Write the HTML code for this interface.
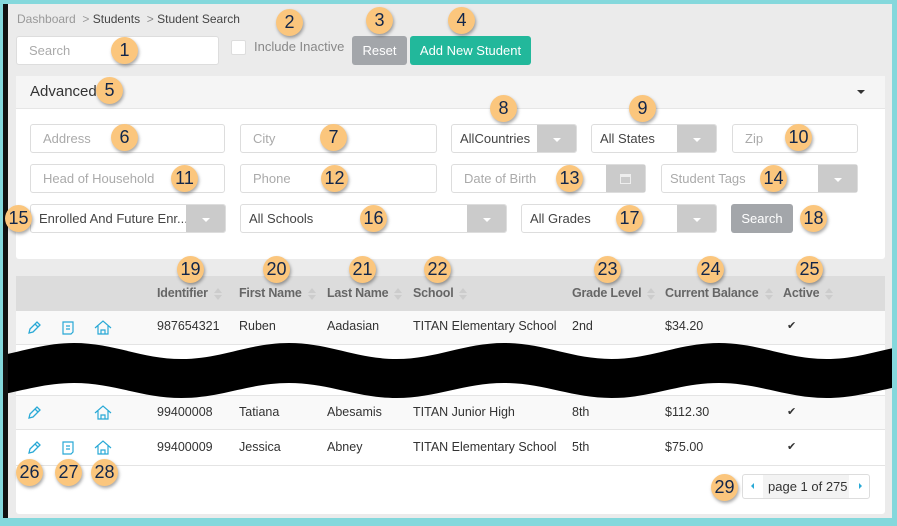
<!DOCTYPE html>
<html><head><meta charset="utf-8"><style>
*{box-sizing:border-box;margin:0;padding:0}
body{width:897px;height:526px;position:relative;overflow:hidden;background:#ebebeb;font-family:"Liberation Sans",sans-serif;font-size:13px;color:#333}
.a{position:absolute}
.inp{position:absolute;background:#fff;border:1px solid #ddd;border-radius:3px;color:#aaa;font-size:13px;padding-left:12px;display:flex;align-items:center}
.sel{position:absolute;background:#fff;border:1px solid #ddd;border-radius:3px;color:#444;font-size:13px;padding-left:8px;display:flex;align-items:center;overflow:hidden}
.sel .b{position:absolute;right:0;top:0;bottom:0;width:39px;background:#cbcbcb}
.sel .b:after{content:"";position:absolute;left:16px;top:13px;border-left:4px solid transparent;border-right:4px solid transparent;border-top:4px solid #fff}
.bd{position:absolute;width:27px;height:27px;border-radius:50%;background:#fbc67d;color:#12264a;font-size:18px;display:flex;align-items:center;justify-content:center;box-shadow:1px 2px 3px rgba(0,0,0,.35);z-index:5}
.h{position:absolute;top:286px;color:#666;font-weight:bold;font-size:12.5px;letter-spacing:-0.2px}
.c{position:absolute;font-size:12.5px;color:#333}
.srt{display:inline-block;width:8px;height:12px;position:relative;vertical-align:middle;margin-left:6px}
.srt:before{content:"";position:absolute;top:0;left:0;border-left:4px solid transparent;border-right:4px solid transparent;border-bottom:5px solid #ccc}
.srt:after{content:"";position:absolute;top:7px;left:0;border-left:4px solid transparent;border-right:4px solid transparent;border-top:5px solid #ccc}
</style></head><body>
<div class="a" style="left:17px;top:12px;font-size:12px;color:#999">Dashboard <span style="color:#999">&nbsp;&gt;&nbsp;</span><span style="color:#444">Students</span> <span style="color:#888">&nbsp;&gt;&nbsp;</span><span style="color:#444">Student Search</span></div>
<div class="inp" style="left:16px;top:36px;width:203px;height:29px">Search</div>
<div class="a" style="left:231px;top:40px;width:15px;height:15px;background:#fff;border:1px solid #ddd;border-radius:2px"></div>
<div class="a" style="left:254px;top:39px;color:#888;font-size:13px">Include Inactive</div>
<div class="a" style="left:352px;top:36px;width:55px;height:29px;background:#a3a6aa;border-radius:3px;color:#fff;display:flex;align-items:center;justify-content:center">Reset</div>
<div class="a" style="left:410px;top:36px;width:121px;height:29px;background:#22b89b;border-radius:3px;color:#fff;display:flex;align-items:center;justify-content:center">Add New Student</div>

<div class="a" style="left:16px;top:76px;width:869px;height:183px;background:#fff;border-radius:3px"></div>
<div class="a" style="left:16px;top:76px;width:869px;height:33px;background:#f5f5f5;border-bottom:1px solid #e6e6e6"></div>
<div class="a" style="left:30px;top:83px;font-size:15px;color:#333">Advanced</div>
<div class="a" style="left:857px;top:90px;border-left:4px solid transparent;border-right:4px solid transparent;border-top:4px solid #333"></div>

<div class="inp" style="left:30px;top:124px;width:195px;height:29px">Address</div>
<div class="inp" style="left:240px;top:124px;width:197px;height:29px">City</div>
<div class="sel" style="left:451px;top:124px;width:126px;height:29px">AllCountries<div class="b"></div></div>
<div class="sel" style="left:591px;top:124px;width:126px;height:29px">All States<div class="b"></div></div>
<div class="inp" style="left:732px;top:124px;width:126px;height:29px">Zip</div>

<div class="inp" style="left:30px;top:164px;width:195px;height:29px">Head of Household</div>
<div class="inp" style="left:240px;top:164px;width:197px;height:29px">Phone</div>
<div class="inp" style="left:451px;top:164px;width:195px;height:29px">Date of Birth<div class="a" style="right:0;top:0;bottom:0;width:39px;background:#cbcbcb"><div class="a" style="left:14px;top:9px;width:11px;height:10px;border:1px solid #eee;border-top:3px solid #eee"></div></div></div>
<div class="inp" style="left:661px;top:164px;width:197px;height:29px;padding-left:8px">Student Tags<div class="a" style="right:0;top:0;bottom:0;width:39px;background:#cbcbcb"></div><div class="a" style="right:15px;top:13px;border-left:4px solid transparent;border-right:4px solid transparent;border-top:4px solid #fff"></div></div>

<div class="sel" style="left:30px;top:204px;width:196px;height:29px;white-space:nowrap">Enrolled And Future Enr...<div class="b"></div></div>
<div class="sel" style="left:240px;top:204px;width:267px;height:29px">All Schools<div class="b"></div></div>
<div class="sel" style="left:521px;top:204px;width:196px;height:29px">All Grades<div class="b"></div></div>
<div class="a" style="left:731px;top:204px;width:62px;height:29px;background:#a3a6aa;border-radius:3px;color:#fff;display:flex;align-items:center;justify-content:center">Search</div>

<div class="a" style="left:16px;top:276px;width:869px;height:238px;background:#fff;border-radius:3px"></div>
<div class="a" style="left:16px;top:276px;width:869px;height:35px;background:#dcdcdc"></div>
<div class="h" style="left:157px">Identifier<span class="srt"></span></div>
<div class="h" style="left:239px">First Name<span class="srt"></span></div>
<div class="h" style="left:327px">Last Name<span class="srt"></span></div>
<div class="h" style="left:413px">School<span class="srt"></span></div>
<div class="h" style="left:572px">Grade Level<span class="srt"></span></div>
<div class="h" style="left:665px">Current Balance<span class="srt"></span></div>
<div class="h" style="left:783px">Active<span class="srt"></span></div>

<div class="a" style="left:16px;top:311px;width:869px;height:34px;background:#f9f9f9;border-bottom:1px solid #e4e4e4"></div>
<div class="a" style="left:16px;top:395px;width:869px;height:35px;background:#f9f9f9;border-top:1px solid #e4e4e4;border-bottom:1px solid #e4e4e4"></div>
<div class="a" style="left:16px;top:465px;width:869px;height:1px;background:#e4e4e4"></div>

<svg class="a" style="left:0;top:0" width="897" height="526">
<defs>
<g id="pen"><path d="M-5 5 L-4 1 L3 -6 L6 -3 L-1 4 Z M1 -4 L4 -1" fill="none" stroke="#29a9d6" stroke-width="1.3"/></g>
<g id="doc"><path d="M-5 -6 H5 V4 L3 6 H-5 Z M-2 -2 H2 M-2 1 H2" fill="none" stroke="#29a9d6" stroke-width="1.2"/></g>
<g id="hs"><path d="M-8 0 L0 -7 L8 0 M-5 -2 V6 H5 V-2 M-2 6 V2 H2 V6" fill="none" stroke="#29a9d6" stroke-width="1.2"/></g>
</defs>
<use href="#pen" x="34" y="328"/><use href="#doc" x="68" y="328"/><use href="#hs" x="103" y="328"/>
<use href="#pen" x="34" y="413"/><use href="#hs" x="103" y="413"/>
<use href="#pen" x="34" y="448"/><use href="#doc" x="68" y="448"/><use href="#hs" x="103" y="448"/>
</svg>

<div class="c" style="left:157px;top:319px">987654321</div><div class="c" style="left:239px;top:319px">Ruben</div><div class="c" style="left:327px;top:319px">Aadasian</div><div class="c" style="left:413px;top:319px">TITAN Elementary School</div><div class="c" style="left:572px;top:319px">2nd</div><div class="c" style="left:665px;top:319px">$34.20</div><div class="c" style="left:787px;top:319px;font-size:11px">✔</div>
<div class="c" style="left:157px;top:405px">99400008</div><div class="c" style="left:239px;top:405px">Tatiana</div><div class="c" style="left:327px;top:405px">Abesamis</div><div class="c" style="left:413px;top:405px">TITAN Junior High</div><div class="c" style="left:572px;top:405px">8th</div><div class="c" style="left:665px;top:405px">$112.30</div><div class="c" style="left:787px;top:405px;font-size:11px">✔</div>
<div class="c" style="left:157px;top:440px">99400009</div><div class="c" style="left:239px;top:440px">Jessica</div><div class="c" style="left:327px;top:440px">Abney</div><div class="c" style="left:413px;top:440px">TITAN Elementary School</div><div class="c" style="left:572px;top:440px">5th</div><div class="c" style="left:665px;top:440px">$75.00</div><div class="c" style="left:787px;top:440px;font-size:11px">✔</div>

<div class="a" style="left:742px;top:474px;width:128px;height:25px;background:#fff;border:1px solid #ddd;border-radius:3px"></div>
<div class="a" style="left:763px;top:475px;width:86px;height:23px;background:#f3f3f3"></div>
<div class="a" style="left:768px;top:479px;font-size:13px;color:#333">page 1 of 275</div>
<div class="a" style="left:751px;top:483px;border-top:3px solid transparent;border-bottom:3px solid transparent;border-right:3px solid #29a9d6"></div>
<div class="a" style="left:859px;top:483px;border-top:3px solid transparent;border-bottom:3px solid transparent;border-left:3px solid #29a9d6"></div>

<svg class="a" style="left:0;top:0;z-index:3" width="897" height="526"><path d="M-33.5 359 C6.5 359 34 343 74 343 S141.5 359 181.5 359 S249 343 289 343 S356.5 359 396.5 359 S464 343 504 343 S571.5 359 611.5 359 S679 343 719 343 S786.5 359 826.5 359 S894 343 934 343 L934 383 C894 383 866.5 398 826.5 398 S759 383 719 383 S651.5 398 611.5 398 S544 383 504 383 S436.5 398 396.5 398 S329 383 289 383 S221.5 398 181.5 398 S114 383 74 383 S6.5 398 -33.5 398 Z" fill="#000"/></svg>

<div class="a" style="left:0;top:0;width:897px;height:4px;background:#84d8dc;z-index:4"></div>
<div class="a" style="left:0;top:518px;width:897px;height:8px;background:#84d8dc;z-index:4"></div>
<div class="a" style="left:0;top:0;width:3px;height:526px;background:#84d8dc;z-index:4"></div>
<div class="a" style="left:3px;top:4px;width:5px;height:514px;background:#111;z-index:4"></div>
<div class="a" style="left:892px;top:0;width:5px;height:526px;background:#84d8dc;z-index:4"></div>

<div class="bd" style="left:111px;top:37px">1</div>
<div class="bd" style="left:276px;top:9px">2</div>
<div class="bd" style="left:366px;top:7px">3</div>
<div class="bd" style="left:448px;top:7px">4</div>
<div class="bd" style="left:96px;top:77px">5</div>
<div class="bd" style="left:111px;top:124px">6</div>
<div class="bd" style="left:320px;top:124px">7</div>
<div class="bd" style="left:490px;top:95px">8</div>
<div class="bd" style="left:629px;top:95px">9</div>
<div class="bd" style="left:785px;top:124px">10</div>
<div class="bd" style="left:171px;top:165px">11</div>
<div class="bd" style="left:321px;top:165px">12</div>
<div class="bd" style="left:556px;top:165px">13</div>
<div class="bd" style="left:760px;top:165px">14</div>
<div class="bd" style="left:5px;top:205px">15</div>
<div class="bd" style="left:360px;top:205px">16</div>
<div class="bd" style="left:616px;top:205px">17</div>
<div class="bd" style="left:800px;top:205px">18</div>
<div class="bd" style="left:177px;top:256px">19</div>
<div class="bd" style="left:263px;top:256px">20</div>
<div class="bd" style="left:349px;top:256px">21</div>
<div class="bd" style="left:424px;top:256px">22</div>
<div class="bd" style="left:594px;top:256px">23</div>
<div class="bd" style="left:697px;top:256px">24</div>
<div class="bd" style="left:796px;top:256px">25</div>
<div class="bd" style="left:16px;top:459px">26</div>
<div class="bd" style="left:55px;top:459px">27</div>
<div class="bd" style="left:91px;top:459px">28</div>
<div class="bd" style="left:711px;top:474px">29</div>
</body></html>
